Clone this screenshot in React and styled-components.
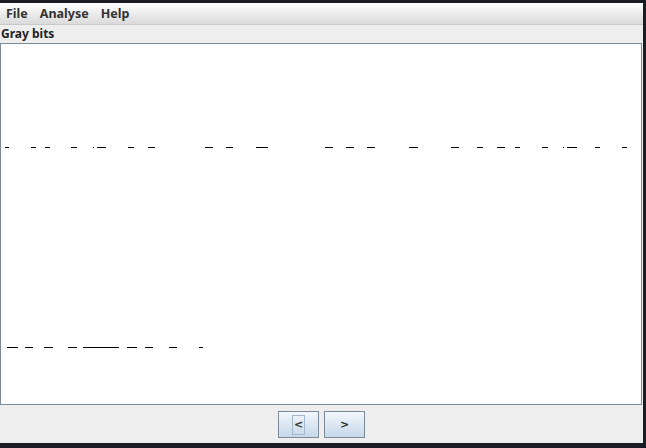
import React from 'react'
import styled, { createGlobalStyle } from 'styled-components'

const GlobalStyle = createGlobalStyle`
    html, body {
        margin: 0;
        padding: 0;
        background: #1b1c24;
        overflow: hidden;
    }
    body {
        font-family: "Noto Sans", "Open Sans", sans-serif;
    }
`

const Frame = styled.div`
    width: 643px;
    height: 440px;
    margin-top: 3px;
    background: #eeeeee;
    display: flex;
    flex-direction: column;
`

const MenuBar = styled.div`
    height: 21px;
    display: flex;
    align-items: center;
    background: linear-gradient(#ffffff, #dadada);
    border-bottom: 1px solid #c9c9c9;
`

const MenuItem = styled.span`
    padding: 0 6px;
    font-size: 12.5px;
    font-weight: 700;
    color: #333333;
    line-height: 21px;
`

const Title = styled.div`
    height: 18px;
    padding-left: 1px;
    font-size: 12px;
    font-weight: 700;
    color: #222222;
    line-height: 18px;
`

const Plot = styled.div`
    width: 640px;
    height: 360px;
    border: 1px solid #7a8a99;
    background: #ffffff;
    overflow: hidden;
    svg {
        display: block;
        shape-rendering: crispEdges;
    }
`

const Footer = styled.div`
    flex: 1;
    display: flex;
    justify-content: center;
    align-items: center;
    gap: 5px;
    padding-top: 1px;
`

const NavButton = styled.button`
    width: 41px;
    height: 27px;
    padding: 0;
    border: 1px solid #7a8a99;
    background: linear-gradient(#f3f7fb, #c5d8ea);
    font-family: "DejaVu Sans", sans-serif;
    font-size: 11px;
    font-weight: 700;
    color: #333333;
    display: flex;
    align-items: center;
    justify-content: center;
    span {
        padding: 1px 1px;
        outline: ${({focused}) => focused ? '1px solid #a3b8cc' : 'none'};
        line-height: 16px;
    }
`

// bit runs per row, as [start, end] page x coordinates
const topRow = [
    [5, 9], [31, 36], [45, 50], [71, 77], [93, 94], [97, 106], [128, 134], [148, 155],
    [205, 213], [226, 233], [256, 268], [325, 333], [346, 354], [367, 375], [409, 418],
    [451, 459], [477, 483], [497, 505], [515, 520], [542, 548], [563, 564], [567, 577],
    [595, 600], [622, 627],
]

const bottomRow = [
    [7, 18], [25, 33], [44, 53], [68, 77], [83, 119], [127, 137], [145, 153], [169, 177], [199, 203],
]

function Bits({row, y}) {
    return row.map(([a, b], i) => (
        <rect key={i} x={a - 1} y={y - 44} width={b - a} height={1} fill="#000" />
    ))
}

export default function App() {
    return (
        <>
            <GlobalStyle />
            <Frame>
                <MenuBar>
                    <MenuItem>File</MenuItem>
                    <MenuItem>Analyse</MenuItem>
                    <MenuItem>Help</MenuItem>
                </MenuBar>
                <Title>Gray bits</Title>
                <Plot>
                    <svg width="640" height="360">
                        <Bits row={topRow} y={147} />
                        <Bits row={bottomRow} y={347} />
                    </svg>
                </Plot>
                <Footer>
                    <NavButton focused><span>&lt;</span></NavButton>
                    <NavButton><span>&gt;</span></NavButton>
                </Footer>
            </Frame>
        </>
    )
}
